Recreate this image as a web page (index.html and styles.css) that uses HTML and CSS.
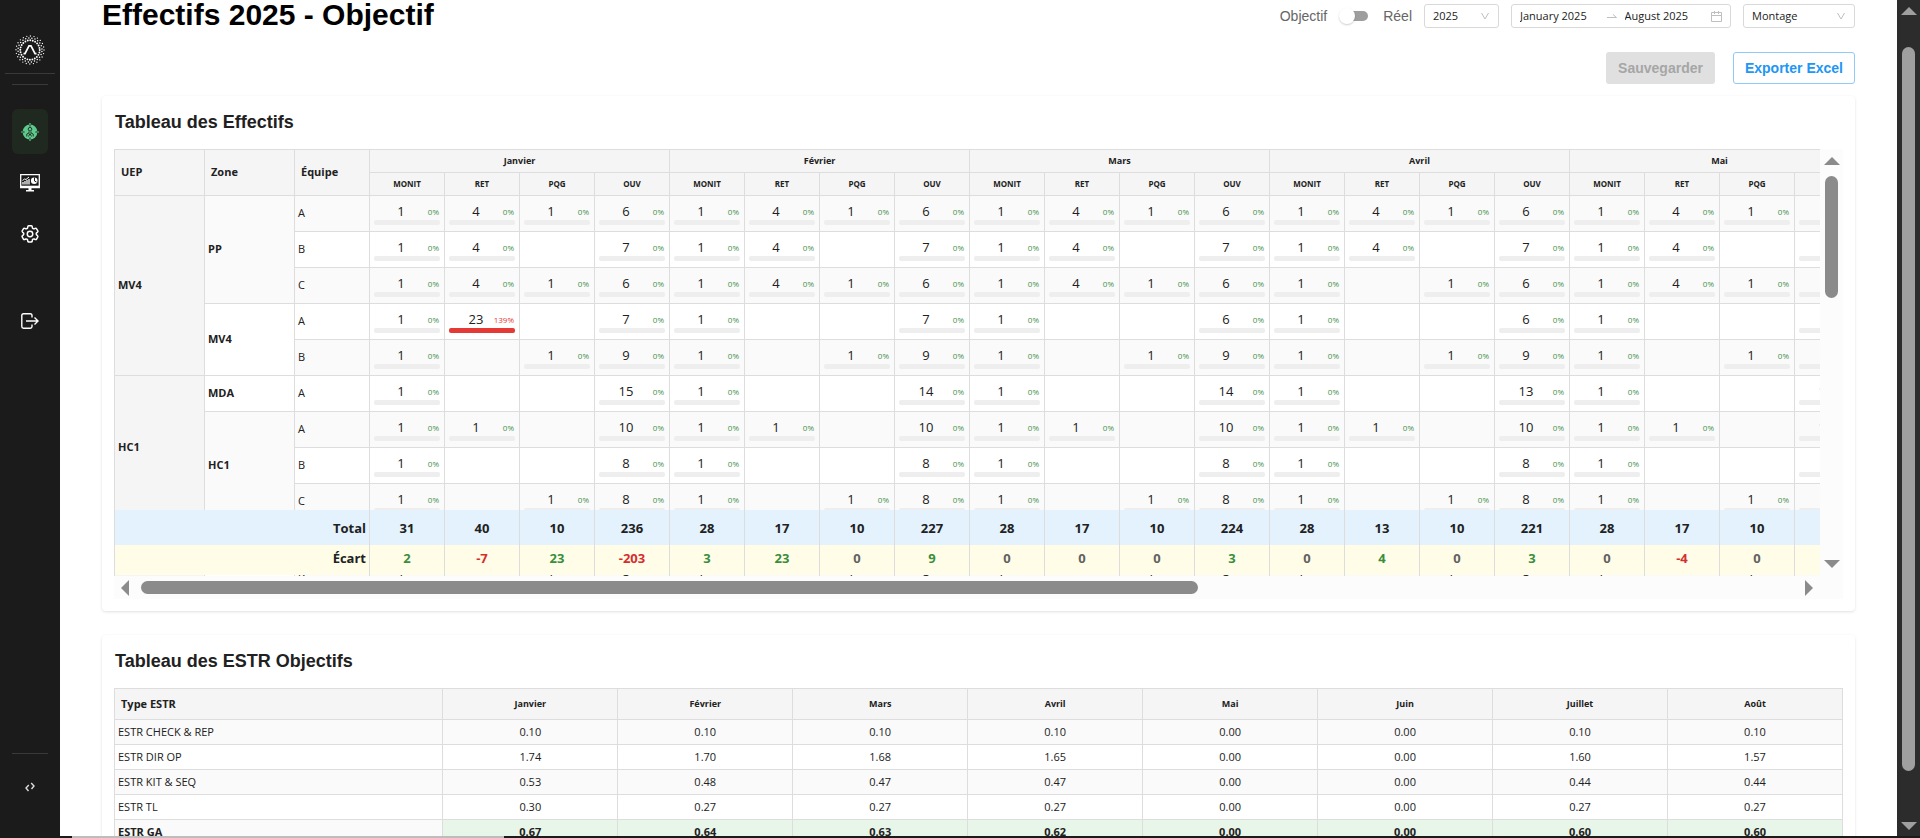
FILE: index.html
```html
<!DOCTYPE html>
<html lang="fr">
<head>
<meta charset="utf-8">
<title>Effectifs 2025 - Objectif</title>
<link rel="stylesheet" href="styles.css">
</head>
<body>
<div class="app">
  <nav class="sidebar" aria-label="Navigation">
    <a class="logo" href="#" aria-label="Accueil">
      <svg width="30" height="30" viewBox="0 0 30 30" fill="none" stroke="#fff">
        <g stroke-linecap="round">
          <circle cx="15" cy="15" r="14" stroke-width="1.300" stroke-dasharray="0 3.665"/>
          <circle cx="15" cy="15" r="12" stroke-width="1.500" stroke-dasharray="0 3.142" stroke-dashoffset="1.570"/>
          <circle cx="15" cy="15" r="9.700" stroke-width="1.900" stroke-dasharray="0 2.539"/>
        </g>
        <path d="M8.500 18.700h1.500L14 10.800h2l4 7.900h1.500" stroke-width="1.700"/>
      </svg>
    </a>
    <hr class="rule rule-wide">
    <hr class="rule">
    <ul class="menu">
      <li><a class="menu-link active" href="#" aria-label="Effectifs" aria-current="page">
        <svg width="18" height="18" viewBox="0 0 18 18">
          <circle cx="9" cy="9" r="7.4" fill="#5fca8d"/>
          <path d="M9 0v4M9 14v4M0 9h3.5M14.500 9H18" stroke="#5fca8d" stroke-width="1.2"/>
          <path d="M9 1.600v2M9 14.400v2M1.600 9h2M14.400 9h2" stroke="#20281f" stroke-width="1"/>
          <circle cx="9" cy="6.200" r="1.800" fill="none" stroke="#20382a"/>
          <path d="M8 8.500v1.500L5.800 11v2.500M10 8.500v1.500l2.200 1v2.500M7.500 13.500l1.500-3 1.500 3" fill="none" stroke="#20382a"/>
        </svg></a></li>
      <li><a class="menu-link" href="#" aria-label="Tableau de bord">
        <svg width="20" height="18" viewBox="0 0 20 18" fill="none" stroke="#fff">
          <path d="M.7.7h18.600v12.800H.7z" stroke-width="1.300"/>
          <path d="M.7 12.700h18.600" stroke-width="2"/>
          <path d="M8.500 13h3v3h2.500v1.500H6V16h2.500z" fill="#fff" stroke="none"/>
          <path d="M3 10.500V8M5 10.500V7M7 10.500V6M9 10.500V5" stroke-width="1.300"/>
          <path d="M2.500 6.500l2-1.500 1.500.5 3-2.500"/>
          <circle cx="14.200" cy="6.800" r="3.300" fill="#fff" stroke="none"/>
          <path d="M14.500 3.500v3.500l2 1" stroke="#1b1b1b"/>
        </svg></a></li>
      <li><a class="menu-link" href="#" aria-label="Paramètres">
        <svg width="22" height="22" viewBox="0 0 24 24" fill="none" stroke="#fff" stroke-width="1.600" stroke-linejoin="round">
          <path d="M9.600 3.900c.1-.5.500-.9 1.100-.9h2.600c.5 0 1 .4 1.100.9l.2 1.300c.1.400.3.700.7.900l.2.100c.3.200.7.200 1.100.100l1.200-.5c.5-.2 1.100 0 1.400.5l1.300 2.200c.3.500.2 1.100-.3 1.400l-1 .8c-.3.300-.5.600-.4 1v.3c0 .4.100.8.400 1l1 .8c.4.400.5 1 .3 1.400l-1.300 2.300c-.3.500-.9.700-1.400.5l-1.200-.5c-.4-.1-.8-.1-1.100.1l-.2.100c-.3.200-.6.500-.7.900l-.2 1.300c-.1.500-.5.900-1.100.9h-2.600c-.5 0-1-.4-1.100-.9l-.2-1.300c-.1-.4-.3-.7-.7-.9l-.2-.1c-.3-.2-.7-.2-1.100-.1l-1.200.5c-.5.200-1.100 0-1.400-.5l-1.300-2.300c-.3-.5-.2-1.100.3-1.400l1-.8c.3-.3.500-.6.400-1v-.3c0-.4-.1-.8-.4-1l-1-.8c-.4-.4-.5-1-.3-1.400l1.300-2.200c.3-.5.900-.7 1.400-.5l1.200.5c.4.100.8.100 1.100-.1l.2-.1c.3-.2.600-.5.700-.9z"/>
          <circle cx="12" cy="12" r="3"/>
        </svg></a></li>
    </ul>
    <a class="menu-link logout" href="#" aria-label="Déconnexion">
      <svg width="18" height="16" viewBox="0 0 18 16" fill="none" stroke="#fff" stroke-width="1.400">
        <path d="M11 4.500V2.500Q11 .8 9.300.8H2.500Q.8.800.8 2.500v11q0 1.700 1.700 1.700h6.800q1.700 0 1.700-1.700v-2M5 8h12M13.500 4.500L17 8l-3.500 3.500"/>
      </svg></a>
    <div class="sidebar-foot">
      <hr class="rule">
      <button class="expand" type="button" aria-label="Déplier le menu">
        <svg width="10" height="10" viewBox="0 0 10 10" fill="none" stroke="#ddd" stroke-width="1.400">
          <path d="M3.800 3L1 6l2.500 3M6.200 1L9 4 6.500 7"/>
        </svg></button>
    </div>
  </nav>

  <main class="content">
    <header class="topbar">
      <h1>Effectifs 2025 - Objectif</h1>
      <form class="filters">
        <span class="mode">
          <label for="mode">Objectif</label>
          <input class="switch" type="checkbox" role="switch" id="mode">
          <label for="mode">Réel</label>
        </span>
        <span class="select select-year">
          <select aria-label="Année"><option>2025</option></select>
          <svg class="chevron" width="8" height="8" viewBox="0 0 8 8"><path d="M.5 1L4 7l3.500-6" fill="none" stroke="#bfbfbf"/></svg>
        </span>
        <span class="range">
          <input type="text" value="January 2025" aria-label="Début">
          <svg width="10" height="6" viewBox="0 0 10 6"><path d="M0 4.500h9.500L6 1.500" fill="none" stroke="#bfbfbf"/></svg>
          <input type="text" value="August 2025" aria-label="Fin">
          <svg width="11" height="11" viewBox="0 0 11 11" fill="none" stroke="#bfbfbf"><path d="M.5 1.500h10v9H.5zM.5 4.500h10M3.500 0v3M7.500 0v3"/></svg>
        </span>
        <span class="select select-dept">
          <select aria-label="Département"><option>Montage</option></select>
          <svg class="chevron" width="8" height="8" viewBox="0 0 8 8"><path d="M.5 1L4 7l3.500-6" fill="none" stroke="#bfbfbf"/></svg>
        </span>
      </form>
    </header>
    <div class="actions">
      <button class="btn btn-save" type="button" disabled>Sauvegarder</button>
      <button class="btn btn-export" type="button">Exporter Excel</button>
    </div>

    <section class="card">
      <h2>Tableau des Effectifs</h2>
      <div class="scroller">
        <div class="viewport">
          <table class="grid staff">
            <thead id="staff-head"></thead>
            <tbody id="staff-body"></tbody>
            <tfoot id="staff-foot"></tfoot>
          </table>
        </div>
        <div class="bar-v" aria-hidden="true"><i class="tri up"></i><i class="thumb"></i><i class="tri down"></i></div>
        <div class="bar-h" aria-hidden="true"><i class="tri left"></i><span class="track"><i class="thumb"></i></span><i class="tri right"></i></div>
      </div>
    </section>

    <section class="card">
      <h2>Tableau des ESTR Objectifs</h2>
      <table class="grid estr">
        <thead id="estr-head"></thead>
        <tbody id="estr-body"></tbody>
      </table>
    </section>
  </main>

  <div class="page-scroll" aria-hidden="true"><i class="tri up"></i><i class="thumb"></i><i class="tri down"></i></div>
</div>
<div class="bottom-edge" aria-hidden="true"></div>
<script src="app.js"></script>
</body>
</html>
```
FILE: styles.css
```css
* { box-sizing: border-box; }
html, body { height: 100%; margin: 0; }
body {
  display: flex;
  flex-direction: column;
  overflow: hidden;
  background: #fff;
  color: #212121;
  font-family: "Liberation Sans", Arial, sans-serif;
}
svg { display: block; flex: none; }
h1, h2, ul, hr { margin: 0; padding: 0; }
.app { flex: 1; min-height: 0; display: flex; }

/* Sidebar */
.sidebar {
  flex: none;
  width: 60px;
  display: flex;
  flex-direction: column;
  align-items: center;
  padding-top: 35px;
  background: #1b1b1b;
}
.rule { width: 36px; height: 1px; border: 0; background: #3a3a3a; }
.rule-wide { width: 50px; margin: 8px 0 10px; }
.menu { list-style: none; margin-top: 24px; display: grid; gap: 6px; }
.menu-link {
  display: grid;
  place-items: center;
  width: 36px;
  height: 45px;
  border-radius: 6px;
}
.menu-link.active { background: #202920; }
.logout { margin-top: 42px; }
.sidebar-foot { margin-top: auto; display: grid; justify-items: center; }
.expand {
  width: 36px;
  height: 66px;
  margin-bottom: 16px;
  padding: 0;
  display: grid;
  place-items: center;
  background: none;
  border: 0;
}

/* Content */
.content { flex: 1; min-width: 0; overflow: hidden; padding: 0 42px; }
.topbar { display: flex; justify-content: space-between; align-items: flex-start; height: 52px; }
h1 { font-size: 30px; line-height: 30px; color: #000; }
.filters {
  display: flex;
  align-items: center;
  gap: 12px;
  padding-top: 4px;
  font-family: "Open Sans", "Noto Sans", sans-serif;
  font-size: 11px;
}
.mode { display: flex; align-items: center; gap: 12px; font: 14px "Liberation Sans", Arial, sans-serif; color: #666; }
.switch { appearance: none; position: relative; width: 32px; height: 16px; margin: 0; }
.switch::before {
  content: "";
  position: absolute;
  inset: 3px 3px 3px 4px;
  border-radius: 5px;
  background: #9e9e9e;
}
.switch::after {
  content: "";
  position: absolute;
  left: 0;
  top: 0;
  width: 16px;
  height: 16px;
  border-radius: 50%;
  background: #fff;
  box-shadow: 0 1px 2px rgba(0, 0, 0, .2);
}
.select, .range {
  position: relative;
  display: flex;
  align-items: center;
  height: 24px;
  border: 1px solid #d9d9d9;
  border-radius: 3px;
  background: #fff;
}
.select-year { width: 75px; }
.select-dept { width: 112px; }
.select select {
  appearance: none;
  width: 100%;
  height: 22px;
  padding: 0 8px 2px;
  border: 0;
  background: none;
  font: inherit;
  color: #222;
}
.chevron { position: absolute; right: 9px; top: 7px; pointer-events: none; }
.range { width: 220px; padding: 0 8px; gap: 8px; }
.range input { flex: 1; min-width: 0; padding: 0 0 2px; border: 0; font: inherit; color: #222; }
.actions { display: flex; justify-content: flex-end; gap: 18px; height: 44px; }
.btn { height: 32px; padding: 0 12px; border: 0; border-radius: 3px; font: bold 14px "Liberation Sans", Arial, sans-serif; }
.btn-save { background: #e0e0e0; color: #a6a6a6; }
.btn-export { padding: 0 11px; border: 1px solid #90caf9; background: #fff; color: #2196f3; }

.card {
  margin-bottom: 24px;
  padding: 12px;
  border-radius: 4px;
  background: #fff;
  box-shadow: 0 1px 3px rgba(0, 0, 0, .12);
}
h2 { font-size: 18px; line-height: 28px; margin-bottom: 13px; padding-left: 1px; }

/* Tables */
.grid {
  table-layout: fixed;
  border-collapse: separate;
  border-spacing: 0;
  border-top: 1px solid #ddd;
  border-left: 1px solid #ddd;
  font: 11px/16px "Open Sans", "Noto Sans", sans-serif;
}
.grid th, .grid td {
  padding: 0 3px 1px;
  border-right: 1px solid #ddd;
  border-bottom: 1px solid #ddd;
  text-align: center;
  overflow: hidden;
  white-space: nowrap;
}
.grid thead th { padding-bottom: 0; background: #f5f5f5; font-size: 9px; font-weight: 700; }
.grid thead .lead { padding: 0 3px 1px 6px; font-size: 11px; text-align: left; }
.grid tbody tr:nth-child(odd) { background: #fafafa; }
.grid tbody tr:nth-child(even) { background: #fff; }
.grid tbody th, .grid .team { text-align: left; font-weight: 400; }
.staff { width: 2656px; }
.staff thead tr { height: 23px; }
.staff thead .sub { font-size: 8px; }
.staff tbody tr { height: 36px; }
.staff tbody th { padding-bottom: 2px; font-weight: 700; background: inherit; }
.staff .team { padding-bottom: 2px; }
.staff tbody .uep { background: #f5f5f5; }
.staff .num { padding: 4px 4px 0; vertical-align: top; }
.cell { display: grid; grid-template-columns: 1fr 12px; padding-top: 2px; line-height: 18px; font-size: 13px; }
.pct { display: flex; justify-content: flex-end; padding-top: 2px; padding-right: 1px; font-size: 8px; line-height: 16px; color: #43914a; }
.over .pct { color: #e53935; }
.meter { display: block; height: 5px; border-radius: 2px; background: #eee; }
.over .meter { background: #e53935; }
.staff tfoot td, .staff tfoot th { position: sticky; padding-bottom: 0; border-bottom: 0; font-size: 13px; font-weight: 700; }
.staff tfoot th { text-align: right; }
.staff .total > * { bottom: 31px; height: 35px; background: #e3f2fd; }
.staff .gap > * { bottom: 1px; height: 30px; padding-bottom: 4px; background: #fffde7; }
.pos { color: #388e3c; }
.neg { color: #d32f2f; }
.zero { color: #616161; }

.estr { width: 100%; }
.estr thead tr { height: 31px; }
.estr tbody tr { height: 25px; }
.estr tbody .ga > * { font-weight: 700; }
.estr tbody .ga td { background: #e8f5e9; }

/* Scroll area */
.scroller { display: grid; grid-template-columns: 1fr 23px; grid-template-rows: 427px 23px; background: #fcfcfc; }
.viewport { overflow: hidden; min-width: 0; }
.bar-v { display: flex; flex-direction: column; align-items: center; padding: 8px 0; gap: 11px; }
.bar-v .thumb { width: 13px; height: 122px; }
.bar-h { display: flex; align-items: center; gap: 12px; padding: 0 7px; }
.track { flex: 1; }
.bar-h .thumb { display: block; width: 64%; height: 13px; }
.thumb { border-radius: 7px; background: #8b8b8b; }
.bar-v .down, .page-scroll .down { margin-top: auto; }
.tri { flex: none; border: 8px solid transparent; color: #8b8b8b; }
.up { border-top: 0; border-bottom-color: currentColor; }
.down { border-bottom: 0; border-top-color: currentColor; }
.left { border-left: 0; border-right-color: currentColor; }
.right { border-right: 0; border-left-color: currentColor; }

.page-scroll {
  flex: none;
  width: 23px;
  display: flex;
  flex-direction: column;
  align-items: center;
  padding: 7px 0 6px;
  background: #2c2c2c;
}
.page-scroll .tri { color: #9f9f9f; }
.page-scroll .thumb { width: 13px; height: 88%; margin-top: 32px; background: #9f9f9f; }
.bottom-edge {
  flex: none;
  height: 2px;
  background: linear-gradient(to right, #1b1b1b 72px, #bdbdbd 72px, #bdbdbd 504px, #1b1b1b 504px);
}
```
FILE: app.js
```js
const months = ["Janvier", "Février", "Mars", "Avril", "Mai", "Juin", "Juillet", "Août"];
const kinds = ["MONIT", "RET", "PQG", "OUV"];

// Each row: headers that start on it, team, then one [MONIT, RET, PQG, OUV] list per month.
// A short list repeats its last month.
const rows = [
  { uep: ["MV4", 5], zone: ["PP", 3], team: "A", m: [[1, 4, 1, 6]] },
  { team: "B", m: [[1, 4, "", 7]] },
  { team: "C", m: [[1, 4, 1, 6], [1, 4, 1, 6], [1, 4, 1, 6], [1, "", 1, 6], [1, 4, 1, 6]] },
  { zone: ["MV4", 2], team: "A", m: [[1, 23, "", 7], [1, "", "", 7], [1, "", "", 6]] },
  { team: "B", m: [[1, "", 1, 9]] },
  { uep: ["HC1", 4], zone: ["MDA", 1], team: "A", m: [[1, "", "", 15], [1, "", "", 14], [1, "", "", 14], [1, "", "", 13]] },
  { zone: ["HC1", 3], team: "A", m: [[1, 1, "", 10]] },
  { team: "B", m: [[1, "", "", 8]] },
  { team: "C", m: [[1, "", 1, 8]] },
  { uep: ["HC2", 5], zone: ["HC2", 5], team: "A", m: [[1, "", 1, 8]] },
  { team: "B", m: [[1, "", 1, 8]] },
  { team: "C", m: [[1, "", 1, 8]] },
  { team: "A", m: [[1, "", 1, 8]] },
  { team: "B", m: [[1, "", 1, 8]] }
];
const totals = [31, 40, 10, 236, 28, 17, 10, 227, 28, 17, 10, 224, 28, 13, 10, 221, 28, 17, 10, 221, 28, 17, 10, 221, 28, 17, 10, 221, 28, 17, 10, 221];
const gaps = [2, -7, 23, -203, 3, 23, 0, 9, 0, 0, 0, 3, 0, 4, 0, 3, 0, -4, 0, 3, 0, 0, 0, 3, 0, 0, 0, 3, 0, 0, 0, 3];

const byId = id => document.getElementById(id);

function numberCell(v) {
  if (v === "") return "<td></td>";
  const over = v === 23;
  return `<td class="num${over ? " over" : ""}"><span class="cell"><span>${v}</span><span class="pct">${over ? "139%" : "0%"}</span></span><span class="meter"></span></td>`;
}

byId("staff-head").innerHTML =
  `<tr><th class="lead" rowspan="2" style="width:90px">UEP</th><th class="lead" rowspan="2" style="width:90px">Zone</th><th class="lead" rowspan="2" style="width:75px">Équipe</th>` +
  months.map(m => `<th colspan="4">${m}</th>`).join("") + "</tr><tr>" +
  months.map(() => kinds.map(k => `<th class="sub">${k}</th>`).join("")).join("") + "</tr>";

byId("staff-body").innerHTML = rows.map(r =>
  "<tr>" +
  (r.uep ? `<th class="uep" rowspan="${r.uep[1]}">${r.uep[0]}</th>` : "") +
  (r.zone ? `<th rowspan="${r.zone[1]}">${r.zone[0]}</th>` : "") +
  `<td class="team">${r.team}</td>` +
  months.map((_, i) => (r.m[i] || r.m[r.m.length - 1]).map(numberCell).join("")).join("") +
  "</tr>").join("");

const sign = v => v > 0 ? "pos" : v < 0 ? "neg" : "zero";
byId("staff-foot").innerHTML =
  `<tr class="total"><th colspan="3">Total</th>${totals.map(v => `<td>${v}</td>`).join("")}</tr>` +
  `<tr class="gap"><th colspan="3">Écart</th>${gaps.map(v => `<td class="${sign(v)}">${v}</td>`).join("")}</tr>`;

const estr = [
  ["ESTR CHECK &amp; REP", "0.10", "0.10", "0.10", "0.10", "0.00", "0.00", "0.10", "0.10"],
  ["ESTR DIR OP", "1.74", "1.70", "1.68", "1.65", "0.00", "0.00", "1.60", "1.57"],
  ["ESTR KIT &amp; SEQ", "0.53", "0.48", "0.47", "0.47", "0.00", "0.00", "0.44", "0.44"],
  ["ESTR TL", "0.30", "0.27", "0.27", "0.27", "0.00", "0.00", "0.27", "0.27"],
  ["ESTR GA", "0.67", "0.64", "0.63", "0.62", "0.00", "0.00", "0.60", "0.60"]
];
byId("estr-head").innerHTML = `<tr><th class="lead" style="width:19%">Type ESTR</th>${months.map(m => `<th>${m}</th>`).join("")}</tr>`;
byId("estr-body").innerHTML = estr.map(([name, ...vals]) =>
  `<tr${name === "ESTR GA" ? ' class="ga"' : ""}><th>${name}</th>${vals.map(v => `<td>${v}</td>`).join("")}</tr>`).join("");
```
